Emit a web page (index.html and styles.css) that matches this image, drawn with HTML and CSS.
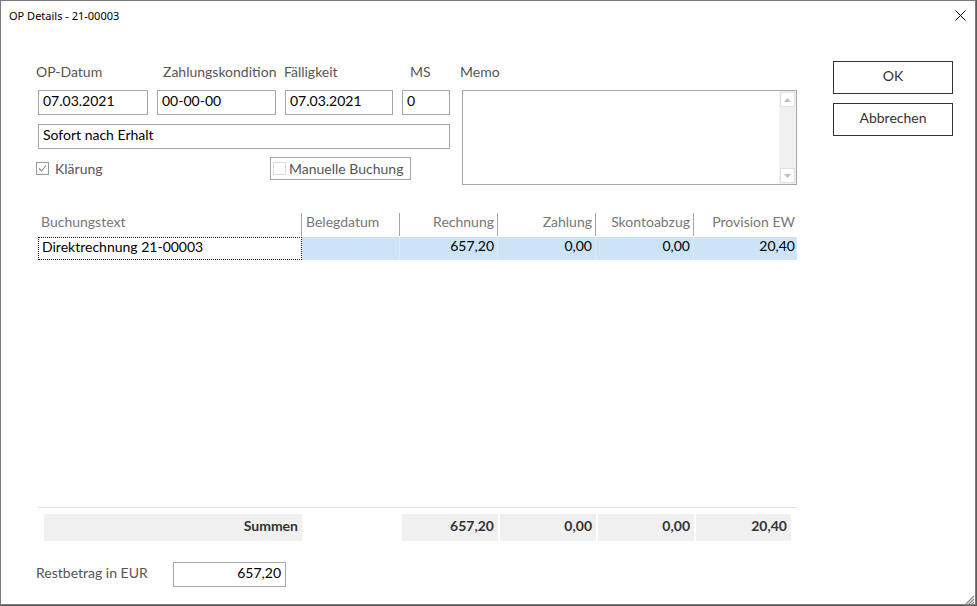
FILE: index.html
```html
<!DOCTYPE html>
<html lang="de">
<head>
<meta charset="utf-8">
<title>OP Details - 21-00003</title>
<link rel="stylesheet" href="styles.css">
</head>
<body>
<div class="window">
  <div class="titlebar">
    <span class="title">OP Details - 21-00003</span>
    <span class="close">
      <svg width="11" height="11" viewBox="0 0 11 11"><path d="M0.5 0.5 L10.5 10.5 M10.5 0.5 L0.5 10.5" stroke="#000" stroke-width="1" fill="none"/></svg>
    </span>
  </div>
  <div class="content">
    <div class="main">
      <div class="top">
        <div class="form">
          <div class="labels">
            <span class="lbl lbl-opdatum">OP-Datum</span>
            <span class="lbl lbl-zk">Zahlungskondition</span>
            <span class="lbl lbl-faellig">Fälligkeit</span>
            <span class="lbl lbl-ms">MS</span>
          </div>
          <div class="inputs">
            <div class="field">07.03.2021</div>
            <div class="field">00-00-00</div>
            <div class="field">07.03.2021</div>
            <div class="field">0</div>
          </div>
          <div class="field field-wide">Sofort nach Erhalt</div>
          <div class="checks">
            <label class="check">
              <span class="box">
                <svg width="11" height="11" viewBox="0 0 11 11"><path d="M2 5.5 L4.5 8 L9 2.5" stroke="#8a8a8a" stroke-width="1.1" fill="none"/></svg>
              </span>
              <span class="check-text">Klärung</span>
            </label>
            <label class="check check-framed">
              <span class="box box-light"></span>
              <span class="check-text">Manuelle Buchung</span>
            </label>
          </div>
        </div>
        <div class="memo">
          <span class="lbl">Memo</span>
          <div class="memo-box">
            <div class="memo-text"></div>
            <div class="scrollbar">
              <span class="sb-btn"><svg width="7" height="4" viewBox="0 0 7 4"><path d="M0 4 L3.5 0 L7 4 Z" fill="#bdbdbd"/></svg></span>
              <span class="sb-track"></span>
              <span class="sb-btn"><svg width="7" height="4" viewBox="0 0 7 4"><path d="M0 0 L3.5 4 L7 0 Z" fill="#bdbdbd"/></svg></span>
            </div>
          </div>
        </div>
      </div>

      <div class="table">
        <div class="thead">
          <div class="th c1">Buchungstext</div>
          <div class="th c2">Belegdatum</div>
          <div class="th c3 num">Rechnung</div>
          <div class="th c4 num">Zahlung</div>
          <div class="th c5 num">Skontoabzug</div>
          <div class="th c6 num">Provision EW</div>
        </div>
        <div class="trow">
          <div class="td c1 focus">Direktrechnung 21-00003</div>
          <div class="td c2 sel"></div>
          <div class="td c3 sel num">657,20</div>
          <div class="td c4 sel num">0,00</div>
          <div class="td c5 sel num">0,00</div>
          <div class="td c6 sel num">20,40</div>
        </div>
      </div>

      <div class="spacer"></div>
      <div class="rule"></div>

      <div class="sums">
        <div class="sum s-label">Summen</div>
        <div class="sum s-rech">657,20</div>
        <div class="sum s-zahl">0,00</div>
        <div class="sum s-sk">0,00</div>
        <div class="sum s-prov">20,40</div>
      </div>

      <div class="rest">
        <span class="lbl">Restbetrag in EUR</span>
        <div class="field field-num">657,20</div>
      </div>
    </div>

    <div class="side">
      <button class="btn">OK</button>
      <button class="btn">Abbrechen</button>
    </div>
  </div>
  <span class="grip">
    <svg width="12" height="12" viewBox="0 0 12 12"><path d="M11 2 L2 11 M11 5 L5 11 M11 8 L8 11" stroke="#8a8a8a" stroke-width="1.2" fill="none"/></svg>
  </span>
</div>
</body>
</html>
```

FILE: styles.css
```css
html, body {
  margin: 0;
  padding: 0;
  background: #5f5f58;
}

body {
  width: 977px;
  height: 606px;
  overflow: hidden;
  font-family: "Lato", "Noto Sans", sans-serif;
  font-size: 14px;
  color: #000;
}

.window {
  position: relative;
  box-sizing: border-box;
  width: 976px;
  height: 605px;
  background: #fff;
  border: 1px solid #7a7a7a;
  display: flex;
  flex-direction: column;
}

.titlebar {
  height: 31px;
  flex: none;
  display: flex;
  align-items: center;
  justify-content: space-between;
  padding-left: 8px;
  font-family: "Noto Sans", "Open Sans", sans-serif;
  font-size: 11px;
  color: #000;
}

.title {
  line-height: 16px;
  margin-top: -1px;
}

.close {
  width: 30px;
  height: 31px;
  display: flex;
  align-items: center;
  justify-content: center;
  margin-top: -2px;
}

.content {
  flex: 1;
  display: flex;
  padding-left: 35px;
  min-height: 0;
}

.main {
  width: 761px;
  display: flex;
  flex-direction: column;
  padding-top: 31px;
}

.lbl {
  display: block;
  line-height: 18px;
  height: 18px;
  color: #555;
  white-space: nowrap;
}

.top {
  display: flex;
  height: 122px;
}

.form {
  width: 412px;
  margin-left: 2px;
}

.labels {
  display: flex;
  height: 18px;
  margin-left: -2px;
}

.lbl-opdatum { width: 127px; }
.lbl-zk { width: 121px; }
.lbl-faellig { width: 126px; }
.lbl-ms { width: 30px; }

.inputs {
  display: grid;
  grid-template-columns: 110px 119px 108px 48px;
  column-gap: 9px;
  margin-top: 9px;
}

.field {
  box-sizing: border-box;
  height: 25px;
  border: 1px solid #a6a6a6;
  padding: 0 4px;
  line-height: 19px;
  white-space: nowrap;
  overflow: hidden;
}

.field-wide {
  margin-top: 9px;
  width: 412px;
}

.checks {
  display: flex;
  align-items: center;
  margin-top: 8px;
  height: 23px;
}

.check {
  display: flex;
  align-items: center;
  color: #555;
}

.check:first-child {
  margin-left: -2px;
  width: 234px;
}

.box {
  box-sizing: border-box;
  width: 13px;
  height: 13px;
  border: 1px solid #9a9a9a;
  display: flex;
  align-items: center;
  justify-content: center;
  margin-right: 6px;
  background: #fff;
}

.box-light {
  border-color: #dcdcdc;
  margin-left: 2px;
  margin-right: 3px;
}

.check-framed {
  box-sizing: border-box;
  border: 1px solid #a6a6a6;
  height: 23px;
  width: 141px;
}

.check-text {
  line-height: 17px;
  white-space: nowrap;
  margin-top: -1px;
}

.memo {
  margin-left: 10px;
  width: 337px;
}

.memo-box {
  box-sizing: border-box;
  margin-top: 9px;
  margin-left: 2px;
  width: 335px;
  height: 95px;
  border: 1px solid #a6a6a6;
  display: flex;
}

.memo-text {
  flex: 1;
}

.scrollbar {
  width: 17px;
  background: #f0f0f0;
  display: flex;
  flex-direction: column;
  align-items: center;
  padding: 1px 0;
}

.sb-btn {
  box-sizing: border-box;
  width: 15px;
  height: 15px;
  background: #fff;
  border: 1px solid #e2e2e2;
  display: flex;
  align-items: center;
  justify-content: center;
}

.sb-track {
  flex: 1;
}

.table {
  margin-top: 28px;
  margin-left: 2px;
  width: 759px;
}

.thead, .trow {
  display: grid;
  grid-template-columns: 264px 98px 98px 98px 98px 103px;
  height: 23px;
}

.trow {
  margin-top: 1px;
}

.th {
  box-sizing: border-box;
  line-height: 17px;
  color: #777;
  padding: 0 3px;
  border-right: 1px solid #a6a6a6;
  white-space: nowrap;
}

.th.c2 { padding-left: 4px; }
.th.c6 { border-right: none; padding-right: 2px; }

.num { text-align: right; }

.td {
  box-sizing: border-box;
  line-height: 18px;
  padding: 0 3px;
  white-space: nowrap;
}

.td.focus {
  border: 1px dotted #222;
  line-height: 17px;
  padding-left: 3px;
}

.td.sel {
  background: #cce4f7;
  border-right: 1px solid #dde9f3;
  padding-right: 3px;
}

.td.c6 { border-right: none; padding-right: 2px; }

.spacer {
  flex: 1;
}

.rule {
  height: 1px;
  background: #e3e3e3;
  margin-left: 2px;
  width: 759px;
}

.sums {
  display: flex;
  margin-top: 6px;
  height: 27px;
  margin-left: 8px;
}

.sum {
  box-sizing: border-box;
  background: #f0f0f0;
  line-height: 24px;
  font-weight: bold;
  color: #333;
  text-align: right;
  padding-right: 4px;
  width: 96px;
  margin-left: 2px;
}

.s-label { width: 258px; margin-left: 0; }
.s-rech { margin-left: 100px; }
.s-prov { width: 95px; }

.rest {
  display: flex;
  align-items: center;
  margin-top: 21px;
  margin-bottom: 17px;
}

.rest .lbl {
  width: 137px;
  margin-top: -3px;
}

.field-num {
  width: 113px;
  text-align: right;
}

.side {
  display: flex;
  flex-direction: column;
  margin-left: 36px;
  padding-top: 29px;
  gap: 9px;
}

.btn {
  box-sizing: border-box;
  width: 120px;
  height: 33px;
  background: #fff;
  border: 1px solid #333;
  font-family: inherit;
  font-size: 14px;
  line-height: 17px;
  color: #333;
  padding: 0 0 5px;
  margin: 0;
}

.grip {
  position: absolute;
  right: 0;
  bottom: 0;
  width: 12px;
  height: 12px;
  display: block;
}
```
